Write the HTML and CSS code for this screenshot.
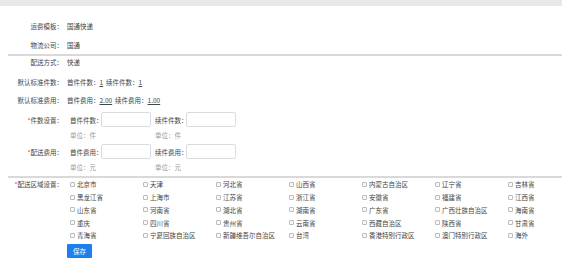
FILE: index.html
```html
<!DOCTYPE html>
<html lang="zh-CN">
<head>
    <meta charset="UTF-8">
    <meta name="viewport" content="width=device-width, initial-scale=1.0">
    <title>运费模板</title>
    <link rel="stylesheet" href="styles.css">
</head>
<body>
    <div class="topbar"></div>

    <div class="page">
        <div class="section basic">
            <div class="row">
                <span class="label">运费模板：</span>
                <span class="value">国通快递</span>
            </div>
            <div class="row">
                <span class="label">物流公司：</span>
                <span class="value">国通</span>
            </div>
        </div>

        <div class="section rules">
            <div class="row">
                <span class="label">配送方式：</span>
                <span class="value">快递</span>
            </div>
            <div class="row gap">
                <span class="label">默认标准件数：</span>
                <span class="value">首件件数：<u>1</u>&nbsp; 续件件数：<u>1</u></span>
            </div>
            <div class="row gap-sm">
                <span class="label">默认标准费用：</span>
                <span class="value">首件费用：<u>2.00</u>&nbsp; 续件费用：<u>1.00</u></span>
            </div>

            <div class="field first">
                <div class="row input-row">
                    <span class="label"><i>*</i>件数设置：</span>
                    <div class="groups">
                        <div class="group">
                            <label for="firstCount">首件件数：</label>
                            <input type="text" id="firstCount">
                        </div>
                        <div class="group">
                            <label for="nextCount">续件件数：</label>
                            <input type="text" id="nextCount">
                        </div>
                    </div>
                </div>
                <div class="units">
                    <span>单位：件</span>
                    <span>单位：件</span>
                </div>
            </div>

            <div class="field">
                <div class="row input-row">
                    <span class="label"><i>*</i>配送费用：</span>
                    <div class="groups">
                        <div class="group">
                            <label for="firstFee">首件费用：</label>
                            <input type="text" id="firstFee">
                        </div>
                        <div class="group">
                            <label for="nextFee">续件费用：</label>
                            <input type="text" id="nextFee">
                        </div>
                    </div>
                </div>
                <div class="units">
                    <span>单位：元</span>
                    <span>单位：元</span>
                </div>
            </div>
        </div>

        <div class="section area">
            <div class="area-row">
                <span class="label"><i>*</i>配送区域设置：</span>
                <div class="regions" id="regions"></div>
            </div>
            <button class="save">保存</button>
        </div>
    </div>

    <script>
        const regioes = [
            '北京市', '天津', '河北省', '山西省', '内蒙古自治区', '辽宁省', '吉林省',
            '黑龙江省', '上海市', '江苏省', '浙江省', '安徽省', '福建省', '江西省',
            '山东省', '河南省', '湖北省', '湖南省', '广东省', '广西壮族自治区', '海南省',
            '重庆', '四川省', '贵州省', '云南省', '西藏自治区', '陕西省', '甘肃省',
            '青海省', '宁夏回族自治区', '新疆维吾尔自治区', '台湾', '香港特别行政区', '澳门特别行政区', '海外'
        ];

        const lista = document.getElementById('regions');
        regioes.forEach((nome, i) => {
            lista.insertAdjacentHTML('beforeend', `
                <label class="region"><input type="checkbox" id="r${i}"><span>${nome}</span></label>
            `);
        });
    </script>
</body>
</html>
```

FILE: styles.css
```css
* {
    box-sizing: border-box;
}

body {
    margin: 0;
    background: #fff;
    color: #444;
    font-family: "Noto Sans CJK SC", "Liberation Sans", sans-serif;
    font-size: 6.5px;
}

.topbar {
    width: 562px;
    height: 6px;
    background: #e8e8e8;
}

.page {
    width: 562px;
    padding-left: 8px;
}

.section {
    border-bottom: 2px solid #d9d9d9;
}

.basic {
    padding-top: 10px;
}

.basic .row {
    height: 19px;
}

.row {
    display: flex;
    align-items: center;
    height: 12px;
}

.label {
    width: 55px;
    text-align: right;
    flex-shrink: 0;
    margin-right: 4px;
    white-space: nowrap;
}

.label i {
    color: #e4393c;
    font-style: normal;
}

.value u {
    text-underline-offset: 1px;
}

.rules {
    padding-bottom: 2px;
}

.rules .gap {
    margin-top: 8px;
}

.rules .gap-sm {
    margin-top: 6px;
}

.field {
    margin-top: 2px;
}

.field.first {
    margin-top: 6px;
}

.input-row {
    height: 15px;
}

.groups {
    display: flex;
    gap: 4px;
    padding-left: 3px;
}

.group {
    display: flex;
    align-items: center;
    gap: 4px;
    width: 81px;
}

.group label {
    width: 27px;
    white-space: nowrap;
}

.group input {
    width: 50px;
    height: 15px;
    border: 1px solid #dcdcdc;
    border-radius: 2px;
    padding: 0 3px;
    font-size: 6.5px;
    outline: none;
}

.units {
    display: flex;
    gap: 4px;
    padding-left: 62px;
    height: 15px;
    align-items: center;
    color: #999;
}

.units span {
    width: 81px;
}

.area {
    border-bottom: none;
}

.area-row {
    display: flex;
    align-items: flex-start;
}

.area-row .label {
    line-height: 12.75px;
}

.regions {
    display: grid;
    grid-template-columns: repeat(7, 73px);
    grid-auto-rows: 12.75px;
    padding-left: 3px;
}

.region {
    display: flex;
    align-items: center;
    gap: 2px;
    white-space: nowrap;
}

.region input {
    margin: 0;
    width: 5px;
    height: 5px;
    appearance: none;
    border: 1px solid #bbb;
    border-radius: 1px;
    background: #fafafa;
}

.save {
    margin: 2px 0 0 59px;
    width: 25px;
    height: 14px;
    border: none;
    border-radius: 1px;
    background: #1b7ff0;
    color: #fff;
    font-family: inherit;
    font-size: 6.5px;
    padding: 0;
    cursor: pointer;
}
```
